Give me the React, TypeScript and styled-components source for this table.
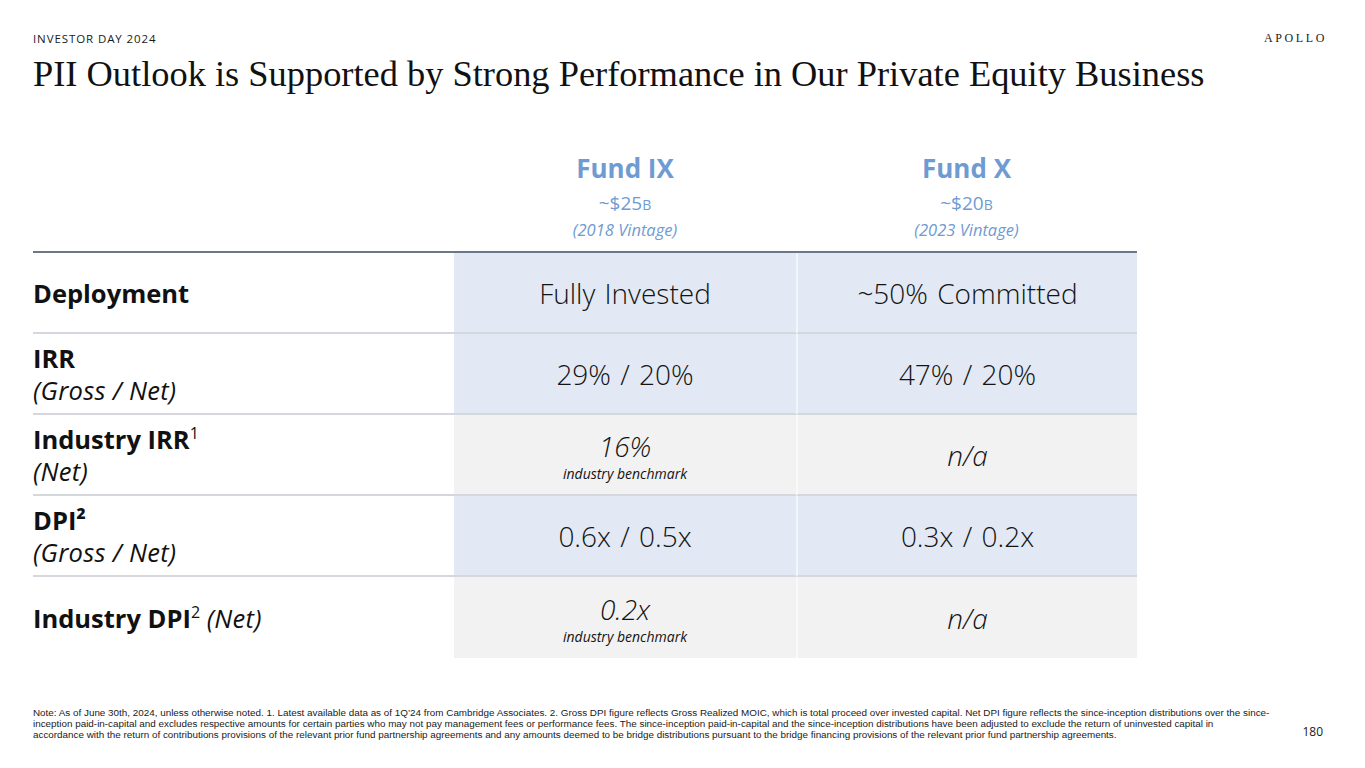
import React from "react";
import styled, { createGlobalStyle } from "styled-components";

const Global = createGlobalStyle`
  html, body { margin: 0; padding: 0; background: #ffffff; }
  body { width: 1365px; height: 768px; overflow: hidden; }
`;

const SANS = `"Open Sans", "Noto Sans", sans-serif`;
const SERIF = `"Liberation Serif", "DejaVu Serif", serif`;

const Page = styled.div`
  width: 1365px;
  height: 768px;
  box-sizing: border-box;
  padding: 30px 40px 0 33px;
  display: flex;
  flex-direction: column;
  font-family: ${SANS};
  color: #111;
`;

const TopBar = styled.div`
  display: flex;
  justify-content: space-between;
  align-items: center;
  height: 16px;
`;

const Kicker = styled.div`
  font-size: 11.5px;
  letter-spacing: 0.9px;
  color: #1a1a1a;
`;

const Logo = styled.div`
  font-family: ${SERIF};
  font-size: 12px;
  letter-spacing: 2.6px;
  margin-right: -2px;
  color: #1a1a1a;
`;

const Title = styled.h1`
  margin: 8px 0 0 0;
  font-family: ${SERIF};
  font-weight: 400;
  font-size: 36.4px;
  line-height: 40px;
  color: #111;
  white-space: nowrap;
`;

const Table = styled.div`
  margin-top: 57px;
  width: 1104px;
  display: grid;
  grid-template-columns: 421px 342px 341px;
`;

const HeadCell = styled.div<{ col: number }>`
  grid-column: ${(p) => p.col};
  display: flex;
  flex-direction: column;
  align-items: center;
  color: #6f9bd3;
  padding-bottom: 10px;
`;

const FundName = styled.div`
  font-weight: 700;
  font-size: 26px;
  line-height: 34px;
`;

const FundSize = styled.div`
  font-size: 19px;
  line-height: 22px;
  margin-top: 7px;
  small { font-size: 14px; }
`;

const Vintage = styled.div`
  font-style: italic;
  font-size: 16.5px;
  line-height: 22px;
  margin-top: 3px;
`;

const HeadRule = styled.div`
  grid-column: 1 / span 3;
  height: 2px;
  background: #6b7888;
`;

const LabelCell = styled.div<{ last?: boolean }>`
  height: 81px;
  box-sizing: border-box;
  display: flex;
  flex-direction: column;
  justify-content: center;
  font-size: 25.5px;
  line-height: 32px;
  border-bottom: ${(p) => (p.last ? "none" : "2px solid #d4d7dc")};
  b { font-weight: 700; }
  i { font-style: italic; letter-spacing: 0.3px; }
  sup { font-size: 16px; font-weight: 400; vertical-align: 10px; line-height: 0; }
`;

const ValueCell = styled.div<{ tone: "blue" | "gray"; last?: boolean; right?: boolean }>`
  height: 81px;
  box-sizing: border-box;
  display: flex;
  flex-direction: column;
  align-items: center;
  justify-content: center;
  background: ${(p) => (p.tone === "blue" ? "#e2e9f4" : "#f2f2f2")};
  border-bottom: ${(p) => (p.last ? "none" : "2px solid #d4d7dc")};
  border-left: ${(p) => (p.right ? "2px solid rgba(255,255,255,0.55)" : "none")};
  font-size: 28px;
  line-height: 32px;
  color: #141414;
  font-weight: 300;
  word-spacing: 2px;
`;

const ItalicValue = styled.div`
  font-style: italic;
  font-size: 28px;
  line-height: 38px;
  font-weight: 300;
`;

const Bench = styled.div`
  font-style: italic;
  font-size: 14px;
  line-height: 18px;
  font-weight: 400;
  word-spacing: 0;
`;

const Footer = styled.div`
  margin-top: auto;
  margin-bottom: 28px;
  display: flex;
  justify-content: space-between;
  align-items: flex-end;
`;

const Note = styled.div`
  font-family: "Liberation Sans", "Arial", sans-serif;
  font-size: 9.87px;
  line-height: 11px;
  color: #1a1a1a;
  white-space: nowrap;
`;

const PageNum = styled.div`
  font-size: 12px;
  color: #1a1a1a;
  margin-right: 2px;
`;

type Row = {
  label: React.ReactNode;
  tone: "blue" | "gray";
  a: React.ReactNode;
  b: React.ReactNode;
};

const rows: Row[] = [
  { label: <b>Deployment</b>, tone: "blue", a: "Fully Invested", b: "~50% Committed" },
  {
    label: (
      <>
        <b>IRR</b>
        <i>(Gross / Net)</i>
      </>
    ),
    tone: "blue",
    a: "29% / 20%",
    b: "47% / 20%",
  },
  {
    label: (
      <>
        <b>
          Industry IRR<sup>1</sup>
        </b>
        <i>(Net)</i>
      </>
    ),
    tone: "gray",
    a: (
      <>
        <ItalicValue>16%</ItalicValue>
        <Bench>industry benchmark</Bench>
      </>
    ),
    b: <ItalicValue>n/a</ItalicValue>,
  },
  {
    label: (
      <>
        <b>DPI²</b>
        <i>(Gross / Net)</i>
      </>
    ),
    tone: "blue",
    a: "0.6x / 0.5x",
    b: "0.3x / 0.2x",
  },
  {
    label: (
      <span>
        <b>
          Industry DPI<sup>2</sup>
        </b>{" "}
        <i>(Net)</i>
      </span>
    ),
    tone: "gray",
    a: (
      <>
        <ItalicValue>0.2x</ItalicValue>
        <Bench>industry benchmark</Bench>
      </>
    ),
    b: <ItalicValue>n/a</ItalicValue>,
  },
];

export default function App() {
  return (
    <>
      <Global />
      <Page>
        <TopBar>
          <Kicker>INVESTOR DAY 2024</Kicker>
          <Logo>APOLLO</Logo>
        </TopBar>
        <Title>PII Outlook is Supported by Strong Performance in Our Private Equity Business</Title>
        <Table>
          <HeadCell col={2}>
            <FundName>Fund IX</FundName>
            <FundSize>
              ~$25<small>B</small>
            </FundSize>
            <Vintage>(2018 Vintage)</Vintage>
          </HeadCell>
          <HeadCell col={3}>
            <FundName>Fund X</FundName>
            <FundSize>
              ~$20<small>B</small>
            </FundSize>
            <Vintage>(2023 Vintage)</Vintage>
          </HeadCell>
          <HeadRule />
          {rows.map((r, i) => {
            const last = i === rows.length - 1;
            return (
              <React.Fragment key={i}>
                <LabelCell last={last}>{r.label}</LabelCell>
                <ValueCell tone={r.tone} last={last}>
                  {r.a}
                </ValueCell>
                <ValueCell tone={r.tone} last={last} right>
                  {r.b}
                </ValueCell>
              </React.Fragment>
            );
          })}
        </Table>
        <Footer>
          <Note>
            Note: As of June 30th, 2024, unless otherwise noted. 1. Latest available data as of 1Q’24 from Cambridge Associates. 2. Gross DPI figure reflects Gross Realized MOIC, which is total proceed over invested capital. Net DPI figure reflects the since-inception distributions over the since-
            <br />
            inception paid-in-capital and excludes respective amounts for certain parties who may not pay management fees or performance fees. The since-inception paid-in-capital and the since-inception distributions have been adjusted to exclude the return of uninvested capital in
            <br />
            accordance with the return of contributions provisions of the relevant prior fund partnership agreements and any amounts deemed to be bridge distributions pursuant to the bridge financing provisions of the relevant prior fund partnership agreements.
          </Note>
          <PageNum>180</PageNum>
        </Footer>
      </Page>
    </>
  );
}
